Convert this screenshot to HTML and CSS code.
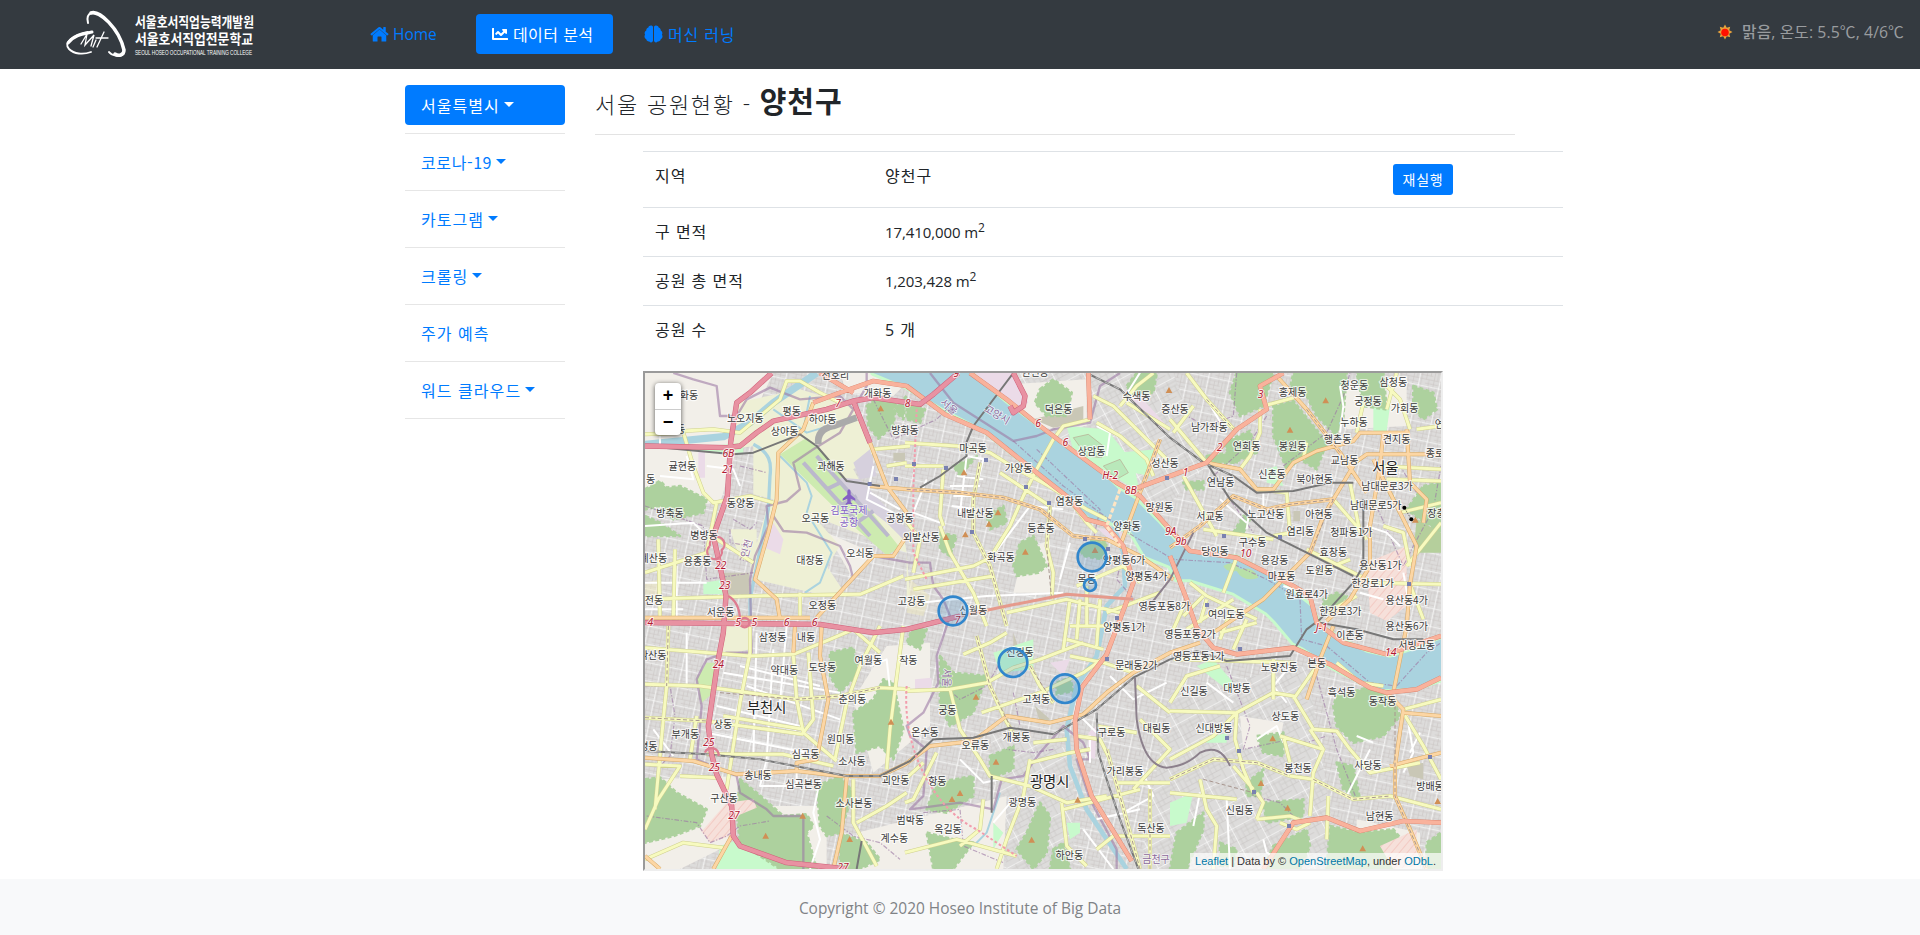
FILE: index.html
```html
<!DOCTYPE html>
<html lang="ko">
<head>
<meta charset="utf-8">
<title>서울 공원현황</title>
<link rel="stylesheet" href="styles.css">
</head>
<body>
<nav class="navbar">
  <svg class="logo" viewBox="0 0 190 48" width="190" height="48">
    <g fill="none" stroke="#fff" stroke-linecap="round">
      <path d="M22 13C19 2 28-1 39 9C53 21 60 39 57 44C54 48 45 45 43 42" stroke-width="2"/>
      <path d="M25 3C33 0 53 18 58 40C58 46 52 46 49 44" stroke-width="3.5"/>
      <path d="M22 22C6 25-3 33 3 39C8 44 17 45 25 42" stroke-width="1.8"/>
      <path d="M2 33C8 25 17 24 26 22" stroke-width="3"/>
      <path d="M15 34L21 24L19 35L28 25L25 36M30 30L27 37M38 22L31 37M30 28H42" stroke-width="1.3"/>
    </g>
    <text class="logo-name" x="69" y="17" textLength="119" lengthAdjust="spacingAndGlyphs">서울호서직업능력개발원</text>
    <text class="logo-name" x="69" y="34" textLength="118" lengthAdjust="spacingAndGlyphs">서울호서직업전문학교</text>
    <text class="logo-sub" x="69" y="45" textLength="117" lengthAdjust="spacingAndGlyphs">SEOUL HOSEO OCCUPATIONAL TRAINING COLLEGE</text>
  </svg>
  <div class="nav-links">
    <a class="nav-link home"><svg width="19" height="16" viewBox="0 0 576 512"><path fill="currentColor" d="M288 115L72 293v187q0 16 16 16h136V352q0-16 16-16h96q16 0 16 16v144h136q16 0 16-16V293zM572 251L488 182V44q0-12-12-12h-56q-12 0-12 12v72L318 43q-30-22-60 0L4 251q-8 8-2 17l26 31q8 8 17 2L280 107q8-6 16 0l235 194q9 6 17-2l26-31q6-9-2-17z"/></svg><span>Home</span></a>
    <a class="nav-link active"><svg width="16" height="16" viewBox="0 0 512 512"><path fill="currentColor" d="M64 64H16Q0 64 0 80v336q0 32 32 32h464q16 0 16-16v-32q0-16-16-16H64zM464 96H346c-22 0-32 26-17 41l32 32-73 73-73-73q-23-20-45 0L103 236q-12 12 0 23l22 22q12 12 23 0l44-44 73 73q23 20 46 0l96-96 32 32c15 15 41 5 41-17V112q0-16-16-16z"/></svg><span>데이터 분석</span></a>
    <a class="nav-link brain"><svg width="19" height="18" viewBox="0 0 19 18"><path fill="currentColor" d="M9 1.8C8-.3 4.800.2 4.400 2.400C2.400 3 2.200 4.700 2.300 5.500C.4 6.700.3 8.600 1.100 9.700C-.1 11.300.6 13.400 2.200 14C2.200 16 4.300 16.700 5.300 16.400C6.500 18.200 9 17.300 9 15.600zM10 1.800C11-.3 14.200.2 14.600 2.400C16.600 3 16.800 4.700 16.700 5.500C18.600 6.700 18.700 8.600 17.900 9.700C19.100 11.300 18.400 13.400 16.800 14C16.800 16 14.700 16.700 13.700 16.400C12.500 18.200 10 17.300 10 15.600z"/></svg><span>머신 러닝</span></a>
  </div>
  <div class="weather"><svg width="16" height="16" viewBox="-8 -8 16 16"><path fill="#e9a23b" d="M0-7.500L1.800-4.300L5.200-5.200L4.300-1.800L7.500 0L4.300 1.800L5.200 5.200L1.800 4.300L0 7.500L-1.800 4.300L-5.200 5.200L-4.300 1.800L-7.500 0L-4.300-1.800L-5.200-5.200L-1.800-4.300z"/><circle cy=".5" r="3.800" fill="#f10"/></svg><span><b>맑음</b>, 온도: 5.5℃, 4/6℃</span></div>
</nav>

<main class="page">
  <aside class="sidebar">
    <div class="side-item"><a class="side-link selected caret">서울특별시</a></div>
    <div class="side-item"><a class="side-link caret corona">코로나-19</a></div>
    <div class="side-item"><a class="side-link caret">카토그램</a></div>
    <div class="side-item"><a class="side-link caret">크롤링</a></div>
    <div class="side-item"><a class="side-link">주가 예측</a></div>
    <div class="side-item"><a class="side-link caret">워드 클라우드</a></div>
  </aside>
  <section class="content">
    <h3 class="title"><span>서울 공원현황 -</span> <strong>양천구</strong></h3>
    <div class="detail">
      <table class="info">
        <tr><td class="key">지역</td><td class="value">양천구</td><td class="action"><button class="rerun">재실행</button></td></tr>
        <tr><td>구 면적</td><td class="num">17,410,000 m<sup>2</sup></td><td></td></tr>
        <tr><td>공원 총 면적</td><td class="num">1,203,428 m<sup>2</sup></td><td></td></tr>
        <tr><td>공원 수</td><td>5 개</td><td></td></tr>
      </table>
      <div class="map">
<svg class="tiles" viewBox="15 21 2388 1488" preserveAspectRatio="none">
<defs>
  <pattern id="streets" width="62" height="54" patternUnits="userSpaceOnUse" patternTransform="rotate(12)">
    <path class="lane" d="M0 9H62M0 22H40M0 34H62M20 46H62M8 0V54M22 9V34M34 0V22M46 9V54M56 0V34M30 34V54"/>
    <path class="street" d="M0 0H62M0 0V54"/>
  </pattern>
  <pattern id="streets-b" width="83" height="71" patternUnits="userSpaceOnUse" patternTransform="rotate(-28)">
    <path class="lane" d="M0 12H83M30 24H83M0 40H83M0 55H50M12 0V71M27 12V55M44 0V40M60 24V71M72 0V40"/>
    <path class="street" d="M0 0H83M0 0V71"/>
  </pattern>
  <pattern id="hatch" width="18" height="18" patternUnits="userSpaceOnUse" patternTransform="rotate(40)">
    <path d="M0 0V18" stroke="#efb5ad" stroke-width="3"/>
  </pattern>
</defs>
<rect x="15" y="21" width="2388" height="1488" fill="#dddcdb"/>
<rect x="15" y="21" width="2388" height="1488" fill="url(#streets)"/>
<path fill="#dddcdb" d="M1040 21H1600L1700 300L1500 500L1300 400zM1590 980L2000 900L2100 1509H1500zM1050 1100L1300 1150V1509H1100z"/>
<path fill="url(#streets-b)" d="M1040 21H1600L1700 300L1500 500L1300 400zM1590 980L2000 900L2100 1509H1500zM1050 1100L1300 1150V1509H1100z"/>
<g class="open">
  <path d="M15 21H400L290 250L240 410L15 430zM600 21H830L760 90L620 80zM60 1240L300 1230L260 1440L120 1509H15V1240zM400 1320H560V1509H340zM560 500L700 560L640 640zM640 1000L740 840L870 830V1080L700 1220zM650 1400L1100 1290L1090 1509H640zM1040 60L1340 40V180L1180 190zM1800 1050L1930 1070L1920 1130L1810 1150zM1150 560L1230 520V680H1120zM2100 50L2300 30V180L2120 190zM2150 1360L2340 1400V1509H2150z"/>
</g>
<path class="farm" d="M290 110L480 70L640 120L700 260L640 310L700 420L790 500L800 560L810 690L560 690L345 640L330 600L380 430L400 400L340 385L340 240L280 250zM250 780H330V850L240 870zM520 450L600 540L560 600L620 690H800V560zM270 490H350V590L300 580z"/>
<path fill="#efeabf" opacity=".5" d="M810 640L870 690L850 750L800 740zM15 650L60 640V700H15z"/>
<path class="grass" d="M420 265L500 215L560 270L780 545L740 568L640 480zM170 940L200 890H230L220 980L185 1010z"/>
<path class="terminal" d="M600 335L660 340L800 490L800 530L740 470L610 370zM640 290L690 250L710 330L660 340z"/>
<path class="runway" d="M490 290L690 510M530 270L745 510M560 370L600 350M600 420L650 390M650 470L700 435"/>
<path class="industrial" d="M1000 21H1120L1165 110L1110 140L1030 80zM400 470L430 520L420 565L375 545zM175 255H195V335H175zM825 940L875 935V970H825zM1370 485L1450 500L1440 550zM1230 890L1290 880L1270 930zM1345 1100L1370 1080L1365 1180L1345 1170zM1450 75L1500 90L1590 190L1560 190z"/>
<path class="school" d="M250 620H328V685H250zM1180 160L1330 120V170L1240 185zM1185 1020L1230 1060L1200 1070zM2300 1200L2350 1190V1240L2310 1230zM1960 435H1980V465H1960zM1120 800L1145 870H1120zM760 260H795V285H760z"/>
<path class="park" d="M1280 180L1400 190L1480 290L1500 380L1300 255zM1430 260L1550 250L1530 330L1480 320zM190 650L255 640V685H190zM160 245L310 230V260L160 255zM240 1440L300 1420L440 1490V1509H230zM1060 860L1180 820L1180 910L1080 920zM1670 900L1720 880L1780 950L1760 970zM1590 1310L1660 1280L1640 1370L1590 1380zM2200 120H2250L2240 195H2200zM1060 1370L1090 1400L1060 1450zM1280 1370H1320V1400L1290 1420zM1880 310L1910 300L1930 360L1880 350zM1690 1120L1760 1100V1130H1700z"/>
<path class="stadium" d="M1300 215L1345 205L1390 240L1385 275L1340 270zM1390 300L1440 280L1465 320L1430 340z"/>
<g class="forest">
  <path d="M15 370L60 345L80 365L120 360L200 400L190 440L100 460L60 420L15 430zM15 450L60 470L120 510H15zM680 120L720 90L770 105L760 180L715 218L685 180zM800 100L855 130L840 170L800 160zM800 90L760 130L790 160z"/>
  <path d="M1200 70L1240 40L1295 80L1280 150L1220 150L1185 110zM1120 600L1140 530L1180 510L1220 600L1195 620L1130 630zM1320 550L1360 520L1400 530L1390 580L1330 570zM1460 60L1490 21H1550L1540 80L1480 85zM1040 450L1090 420L1100 470L1050 490zM900 500L950 510L930 570L900 550zM940 300L1010 270L960 330z"/>
  <path d="M1790 21H1900L1870 120L1800 150L1770 80zM1900 120L1960 105L2060 230L2030 310L1980 280L1940 310L1900 210zM1960 21H2120L2110 150L2090 210L2030 150L2000 90L1950 70zM2150 21H2230L2240 130L2170 120zM2320 60L2380 80L2390 130L2350 160L2320 130zM2350 360L2403 350V500L2340 460L2300 430zM1750 230L1830 195L1850 260L1780 290zM1700 270L1770 260L1790 290H1700zM1630 350L1690 345L1690 370L1640 370zM1780 500L1810 450L1830 460L1810 500zM2050 700L2090 680L2120 690L2100 720L2050 730z"/>
  <path d="M570 860L640 845L655 920L600 980L570 930zM640 1040L700 1000L730 940L760 950L790 1090L760 1180L720 1140L650 1160zM15 1240L60 1235L110 1280L200 1330L180 1380L100 1410L15 1430zM300 1240L350 1280L430 1350L500 1345L520 1380L500 1400L530 1509H420L300 1430L290 1340zM530 1260L600 1230L640 1280L600 1400L560 1410L540 1380zM600 1400L680 1430L720 1480L660 1509H600z"/>
  <path d="M900 870L940 920L1040 930L1000 1040L930 1080L900 1020zM1050 1170L1120 1140L1120 1210L1050 1240zM890 1250L1000 1230L1000 1290L920 1340L860 1330zM1160 1400L1200 1310L1230 1350L1220 1460L1180 1509L1130 1450zM860 1400L940 1420L1000 1430L940 1509H880zM820 780L860 790L840 850L800 830zM1240 1450L1270 1430L1290 1509H1230zM1250 950L1290 935L1300 975L1250 985z"/>
  <path d="M2090 990L2200 960L2260 1000L2280 1050L2230 1110L2140 1130L2090 1080L2080 1020zM1850 1110L1930 1100L1930 1170L1870 1160zM1870 1310L1990 1300L1990 1350L1880 1370zM1610 1400L1690 1340L1690 1390L1640 1509H1590zM2070 1380L2160 1400L2260 1390L2300 1440L2260 1509H2060zM1900 1440L2000 1390L2010 1440L1980 1509H1870zM2090 1190L2140 1200L2160 1300L2110 1270zM2360 1430L2403 1400V1509H2360zM1820 1250L1870 1210L1860 1290H1820zM1740 1430L1790 1450L1780 1500H1740z"/>
</g>
<path class="military" d="M190 1390L260 1310L340 1300L350 1325L290 1350L270 1410L210 1430L180 1390zM2180 590L2300 540V720L2240 765L2190 740zM2220 1440L2330 1390L2330 1500L2260 1509z"/>
<path fill="url(#hatch)" d="M190 1390L260 1310L340 1300L350 1325L290 1350L270 1410L210 1430L180 1390zM2180 590L2300 540V720L2240 765L2190 740zM2220 1440L2330 1390L2330 1500L2260 1509z"/>
<path fill="#b5cf9c" d="M2330 460L2403 500L2403 560L2320 560z"/>
<g class="stream">
  <path stroke-width="22" d="M15 235L250 212L330 170L400 110L530 21"/>
  <path stroke-width="10" d="M340 235C390 260 395 290 390 330L385 430L350 600L330 700V780"/>
  <path stroke-width="6" d="M420 270L500 350L515 390L500 440L575 560L540 650L495 680M490 190L510 90M400 130L500 200L600 170"/>
  <path stroke-width="14" d="M1420 480L1450 560L1455 660L1400 720L1370 870L1310 960L1280 1090L1290 1200L1340 1330L1460 1509"/>
  <path stroke-width="6" d="M1080 1280L1040 1400L1000 1440"/>
</g>
<path class="river" d="M800 21H990L1095 110L1235 215L1395 330L1435 370L1485 400L1555 470L1600 520L1650 560L1790 575L1910 640L2010 720L2040 780L2100 820L2180 860L2250 875L2330 850L2403 820V940L2330 965L2230 970L2190 960L2080 905L1990 845L1960 830L1905 765L1880 740L1780 680L1650 640L1610 640L1590 600L1515 570L1475 500L1405 465L1355 460L1275 390L1190 320L1030 190L915 130L795 60L700 21z"/>
<path fill="#b8e0a8" d="M1750 600Q1780 580 1800 610Q1840 600 1855 635Q1810 650 1790 615Q1760 620 1750 600z"/>
<path class="boundary" d="M100 21L160 40L230 60L240 150L290 150L320 100L390 65L480 100L600 90L640 130M640 130L600 200L520 250L460 290L480 370L440 405L380 420L385 480L345 570L330 640L335 860L260 860L200 880L170 940L185 1020L170 1180L290 1230L300 1280L380 1330L400 1350L490 1350L490 1509M400 450L430 495L500 500L600 540L630 600L640 640L700 570L810 590L870 590L880 660L910 700L930 750L890 870L895 950L850 1040L800 1080L810 1110L860 1150L850 1290L810 1330L960 1310L1060 1330L1085 1240L1150 1230L1200 1160L1270 1080L1330 1130L1350 1180L1310 1180L1350 1300L1430 1450V1509M640 130L680 60V21M870 21L940 110L1120 225L1190 210L1240 190L1350 170L1380 60L1440 21"/>
<path class="ward" d="M1120 225L1270 360L1380 440L1480 510L1600 580L1770 590L1880 640L1980 700L1985 820L2060 840L2190 950L2270 960L2360 860L2403 830M1190 250L1380 430L1360 520M1450 560L1430 640L1500 720M15 420L190 480L200 640L340 620M20 1350L170 1370L210 1430L260 1410L300 1380L390 1365M560 1350L640 1410L720 1430L780 1480M900 950L960 1000L1040 960L1080 890M1790 21L1780 150L1700 180L1600 130M1880 150L1830 230L1720 330L1840 500M1930 300L2060 200L2110 90L2130 21M2030 930L2060 1040L2090 1150L2150 1300M1760 900L1830 1080L1810 1150L1950 1120L2000 1130L2060 1110M1800 1200L1840 1290L1920 1310L1970 1360M2200 400L2290 600L2320 540L2380 430L2403 300M2330 380L2280 300M1240 1150L1180 1160L1100 1150M1120 980L1140 1080M850 1340L960 1330L970 1440L1090 1490M700 100L760 220L890 160L930 120M15 960L90 960L105 1050L90 1170L60 1200M270 490V530L330 540L300 580L340 590M280 460L330 490L350 470M300 300L380 320"/>
<path class="white" d="M140 270L160 340L60 330M200 300L280 310L300 360M15 480L160 470L190 500M60 150L60 240M110 600V760M15 650H200M15 730H130M140 800V960M40 1090L100 1170M350 800L340 1170M400 850L380 1180M440 780L420 1010M300 900L540 960M320 960L600 1060M200 1100L500 1160M230 1020L480 1080M250 920L600 980M380 1180L360 1260H470V1220M540 1240L520 1340L540 1420L510 1509M690 900L740 880L750 970M700 300L680 400L760 440M690 380L780 430M960 440L980 270L1030 280L1000 400M930 360H1020M940 390H1010M950 330L1030 340M935 420L1010 430M860 340L820 440L900 470M1050 580L1170 420L1270 430M1290 530L1260 640M840 710L1040 690L1270 680M1370 180L1410 200L1400 270M2100 60L2110 120L2100 200M1700 100L1760 200M1740 400L1820 470M1870 380V430M1830 420L1820 490M1930 660L1990 680M2160 680L2230 700M2310 730L2290 620M2180 480L2240 500L2280 540M1500 20L1450 100M1700 950L1780 1010M1950 900L1900 960L1940 1010M1850 1120L1910 1080L1930 1130M2120 1290L2190 1150M2200 1130L2150 1110M2300 1040L2320 1160L2290 1220M1760 1300L1770 1509M1680 1280L1660 1380M2310 1160L2340 1100M1330 1110H1350V1190M1320 1050L1370 1100M1120 1300L1060 1370M1500 1200L1540 1290L1450 1340M1330 1390L1420 1509M1370 1360L1500 1330M960 1180L1030 1250L1080 1240M1870 1420L1880 1460L1900 1470M1410 930L1480 1000L1580 950"/>
<g id="yellow-roads">
<path class="y" d="M15 205L130 200L160 300L190 380L220 410L330 390L400 410M130 195L220 190L300 200L420 100L440 45L480 45L540 80L600 110M15 700L340 690L660 685L790 630M230 410L200 560L15 620M55 520L60 760M105 550L100 760M480 680V760M200 500L340 590M700 250L810 240M740 300L800 290M15 845L330 870L460 865L570 820L640 790L720 860M15 955L180 960L360 985L470 1000L600 990L720 965L810 970M15 1055L200 1065L490 1105M15 1195L120 1200L55 1300L15 1390M330 780V860L300 1010L260 1270M85 780L80 960L70 1060L45 1330M460 870L470 1000L490 1100L590 1185M505 860L520 1060L490 1100M720 780L660 900L620 1010L585 1180M790 780L750 1090L740 1210M640 1240V1370L710 1500M650 1370L740 1320L800 1280M200 1165L430 1165L580 1200M250 1050L490 1090M170 1050L150 1180M230 1235L120 1230M15 1480L130 1430L250 1445"/>
<path class="y" d="M795 230L950 240L1050 260L1130 310L1190 340L1280 390L1340 470L1370 500M1350 160L1270 180L1240 220L1190 310L1150 390L1110 480L1060 560M910 310L900 450L910 480M795 300H910M1020 290L1000 400V500L1050 600L1100 780M900 480L930 560L1000 680L1040 780M795 640L1000 600L1060 570M820 670L1060 630M1230 420L1220 540L1240 620L1235 700M1100 740L1280 700L1440 740M1340 660V780M1360 90L1420 120L1500 200L1590 290M1370 170L1440 210L1520 280L1540 330M1440 120L1490 60L1540 21M1460 110L1590 190M1290 700L1270 850M1380 700L1370 840M1320 700L1310 820M1290 780H1420M1280 820L1390 850M1310 660L1450 600L1500 650M1400 740L1560 680M795 460L840 520L820 620M1160 320L1340 430L1400 460M1080 320L1230 420"/>
<path class="y" d="M795 975L930 970L1040 950L1120 905L1200 880M970 865L1050 830L1100 800M1010 810L1050 960L1095 1060L1125 1110M930 970L960 1090L1020 1180L1050 1230L1170 1260L1280 1310L1400 1290M1170 900L1200 960L1240 1010M1025 1040L1200 980L1330 920M795 1240L850 1190M890 1160L820 1300L795 1310M1170 1180L1150 1290L1100 1420L1070 1509M1170 1190L1290 1160L1350 1150M1265 1310L1280 1440L1340 1500M1270 1330L1350 1310L1500 1270M1290 870L1390 890L1480 920M1400 1150L1440 1290L1500 1509M1370 1450L1420 1410H1590M1530 1270V1509M795 1460L950 1420L1130 1470M1030 1300L1020 1390L960 1440M1430 1250H1590M1200 880L1330 830M1330 920L1400 870M1310 1110L1380 1120L1410 1180M1180 1130L1280 1120M1490 960L1590 1040M1500 1060L1590 1150L1480 1270M1370 1080L1490 1100"/>
<path class="y" d="M1590 1035L1790 1040L1900 980L1960 990L2020 1090L2090 1095L2130 1150L2190 1220L2340 1190M1790 1040L1785 1120L1810 1210L1840 1280M1590 1280L1790 1300M1590 1240L1720 1180L1850 1190L1950 1230L2020 1240L2140 1300L2250 1290L2403 1330M1680 1240L1700 1330L1730 1380L1720 1509M1850 1360L1950 1350L2000 1370M2010 1090L2050 1150L2020 1220L2010 1350M2065 1290L2060 1420M1900 1000V880M1960 1000L2030 900M1930 1110L1950 1190M2290 1040L2350 1140L2403 1240M1920 1110L2050 1150M1600 880L1960 890M1590 1010L1640 930L1740 900M1590 1180L1720 1110L1790 1040M1780 1200L1840 1270M2090 890L2160 950L2230 960M2290 1030L2403 1000M1850 1280L1870 1310L1850 1360M2010 1370L1970 1390L1920 1370"/>
<path class="y" d="M1640 21L1700 100L1790 200M1660 120L1600 200M1590 160L1700 290M1860 130V200L1830 270L1800 310M1690 490L1830 510L1900 520M1630 330L1680 420L1730 510M1850 370L1940 380L1950 500L1900 510M2080 400L2150 480L2180 520M2000 550L2100 600L2200 650L2403 655M2220 300L2403 310M2330 190L2403 180M2240 340L2403 345M2240 60L2280 100L2310 190M2170 110L2150 200M2230 480L2290 500L2310 600M2300 600L2403 470M1790 575L1750 680M1650 650L1700 690L1850 760M1630 750L1690 690M1740 800L1850 770M2310 655L2350 760M2060 740L2150 690M1870 120L1980 90M1990 280L2000 230M2130 350L2160 500M2270 21L2240 130M2250 380L2280 440L2403 410M2030 620L2130 580M1640 700L1600 790M1700 700L1680 770M1770 740L1740 820M1820 760L1780 850M1640 790L1780 700"/>
</g>
<use href="#yellow-roads" class="fill-pass"/>
<path class="casing o" d="M520 110L490 190L415 260L410 400L385 500L345 640L410 700L420 760M530 755L640 635L700 570L760 570L800 510M690 230L740 360L800 440M690 360L800 370L960 380L1090 395L1200 430L1300 510L1400 520L1500 570L1600 640M1560 220L1500 380L1440 540M15 755H510M15 1175L160 1185L290 1225L470 1215L600 1230H720L795 1195L870 1140L1000 1125L1100 1050L1230 1070L1330 1045L1400 980L1480 920L1590 860L1680 830M460 860L465 780M545 780L540 870L565 1000L530 1180L470 1190V1220M620 1235L605 1400L580 1509M15 1470L60 1509M275 1410L220 1509M1700 290L1800 310L1850 370H1900L1960 290L2030 255L2140 225L2160 200H2310M2130 300L2180 265H2403M1910 30L2000 130L2100 260L2180 380M2230 200L2220 300L2190 480V600L2130 700L2060 765M2300 190L2310 350L2360 400L2350 470M1590 545L1680 480L1780 390L1880 430L1950 415L2080 400L2140 300M2080 400L2050 450L2010 560L1870 700L1720 800M2200 280L2260 400L2330 540L2310 655L2300 780L2260 980M2240 980L2290 1030L2265 1200V1290L2310 1390L2360 1509M2250 1200L2403 1160M2290 1040L2403 1050M2000 1000L2040 880L2080 780"/>
<path class="orange" d="M520 110L490 190L415 260L410 400L385 500L345 640L410 700L420 760M530 755L640 635L700 570L760 570L800 510M690 230L740 360L800 440M690 360L800 370L960 380L1090 395L1200 430L1300 510L1400 520L1500 570L1600 640M1560 220L1500 380L1440 540M15 755H510M15 1175L160 1185L290 1225L470 1215L600 1230H720L795 1195L870 1140L1000 1125L1100 1050L1230 1070L1330 1045L1400 980L1480 920L1590 860L1680 830M460 860L465 780M545 780L540 870L565 1000L530 1180L470 1190V1220M620 1235L605 1400L580 1509M15 1470L60 1509M275 1410L220 1509M1700 290L1800 310L1850 370H1900L1960 290L2030 255L2140 225L2160 200H2310M2130 300L2180 265H2403M1910 30L2000 130L2100 260L2180 380M2230 200L2220 300L2190 480V600L2130 700L2060 765M2300 190L2310 350L2360 400L2350 470M1590 545L1680 480L1780 390L1880 430L1950 415L2080 400L2140 300M2080 400L2050 450L2010 560L1870 700L1720 800M2200 280L2260 400L2330 540L2310 655L2300 780L2260 980M2240 980L2290 1030L2265 1200V1290L2310 1390L2360 1509M2250 1200L2403 1160M2290 1040L2403 1050M2000 1000L2040 880L2080 780"/>
<path class="subway" d="M15 1055L200 1065M240 980L470 1000L600 990L720 965M800 370L960 380L1090 395L1200 430L1300 510L1400 520M1020 290L1000 400V500L1050 600L1100 780M1230 420L1220 540L1235 700M1560 220L1500 380M1590 545L1680 480L1780 390L1880 430L1950 415L2080 400M2000 130L2100 260M2080 400L2010 560M1590 1240L1720 1180L1850 1190L1950 1230M1690 1240L1840 1280M2265 1000V1290L2360 1509M2020 1240L2140 1300L2250 1290M1170 900L1240 1010M1010 810L1050 960L1125 1110M1700 100L1790 200M1400 1150L1440 1290L1500 1509M1530 1270V1509M85 780L80 960"/>
<path class="rail" d="M15 240L280 265L340 260L480 205L530 240L620 345L720 360M840 365L900 330L980 270L975 240L1000 180L1120 21M15 1155L200 1165L360 1180L620 1230H720L810 1185L880 1120L1000 1115L1110 1085L1240 1105L1370 1030L1480 935L1590 880L1670 855L1760 885L1950 870L2000 790L2040 760L2140 650L2170 600V400M1340 21L1440 70L1590 215L1690 290L1780 330L1850 380L1960 375L2070 350L2140 350M1700 290L1770 400L1880 500L2000 560L2140 630M1370 1040L1375 1160L1400 1240L1440 1360L1495 1509M665 1425L650 1509M2040 770L2150 790L2260 820L2350 820M1055 1230V1340"/>
<path class="rail-dash" d="M15 1155L200 1165L360 1180L620 1230H720M1370 1040L1375 1160L1400 1240L1440 1360L1495 1509M1340 21L1440 70L1590 215L1690 290L1780 330M1240 1105L1370 1030L1480 935"/>
<path class="rail-violet" d="M1485 935L1490 1060Q1510 1200 1580 1205Q1640 1200 1680 1160Q1740 1130 1770 1200M1590 640L1660 500M1590 640L1520 730"/>
<path class="apron" d="M535 235Q530 190 580 180L650 155"/>
<path class="casing t" d="M520 110L600 80L700 45L800 60L915 145L1040 200L1190 320L1280 390L1340 460L1395 475L1450 540L1480 650L1455 720L1400 865L1325 965L1305 1065L1310 1150L1355 1290L1475 1485M990 21L1100 100L1200 180L1300 255L1430 350L1500 390L1590 490L1650 555L1790 575L1900 630L1960 660L2010 690L2030 770L2110 830L2240 865L2403 810M1590 570L1640 700L1670 785L1720 845L1790 865L1960 845L2070 895L2190 965L2240 980L2330 970L2403 935M1930 21L1860 60L1880 130L1790 190L1700 290L1590 330L1480 370M1345 21L1350 160M1870 1509L1960 1370L2060 1355L2160 1395L2290 1365L2403 1370M540 21L640 80"/>
<path class="trunk" d="M520 110L600 80L700 45L800 60L915 145L1040 200L1190 320L1280 390L1340 460L1395 475L1450 540L1480 650L1455 720L1400 865L1325 965L1305 1065L1310 1150L1355 1290L1475 1485M990 21L1100 100L1200 180L1300 255L1430 350L1500 390L1590 490L1650 555L1790 575L1900 630L1960 660L2010 690L2030 770L2110 830L2240 865L2403 810M1590 570L1640 700L1670 785L1720 845L1790 865L1960 845L2070 895L2190 965L2240 980L2330 970L2403 935M1930 21L1860 60L1880 130L1790 190L1700 290L1590 330L1480 370M1345 21L1350 160M1870 1509L1960 1370L2060 1355L2160 1395L2290 1365L2403 1370M540 21L640 80"/>
<path class="casing m" d="M395 21L330 80L290 110L272 230L262 390L220 510L240 600L258 690L250 800L232 895L205 1080L215 1165L230 1225L275 1320L280 1410L300 1440L440 1490L620 1509M15 240L260 245L300 240L350 200L400 165L560 130L640 105L700 95L840 115L880 85L955 21M640 105L690 230M15 770L540 775L700 800L800 790L960 750M1120 21L1155 90L1150 120L1120 140L1110 120"/>
<path class="motorway" d="M395 21L330 80L290 110L272 230L262 390L220 510L240 600L258 690L250 800L232 895L205 1080L215 1165L230 1225L275 1320L280 1410L300 1440L440 1490L620 1509M15 240L260 245L300 240L350 200L400 165L560 130L640 105L700 95L840 115L880 85L955 21M640 105L690 230M15 770L540 775L700 800L800 790L960 750M1120 21L1155 90L1150 120L1120 140L1110 120"/>
<path class="ramp" d="M960 750L1100 720L1280 685L1480 700"/>
<path class="interchange" d="M210 540a22 22 0 1 1 35 12a22 22 0 1 1-35-12M195 1160a20 18 0 1 1 40 10M300 770a14 14 0 1 0 28 0a14 14 0 1 0-28 0M265 690Q300 710 300 765"/>
<path class="tunnel" d="M830 130L820 370L820 560L860 640M800 960Q790 1100 850 1220T1010 1390L1130 1470"/>
<path class="bridge" d="M1440 370L1400 480L1440 540"/>
<g class="peak">
  <path d="M722 118l10 18h-20zM972 310l10 18h-20zM1074 430l10 18h-20zM1047 464l10 18h-20zM976 496l10 18h-20zM918 504l10 18h-20zM1156 548l10 18h-20zM1365 543l10 18h-20zM1587 63l10 18h-20zM2057 94l10 18h-20zM1950 182l10 18h-20zM2326 452l10 18h-20z"/>
  <path d="M753 1058l10 18h-20zM488 1340l10 18h-20zM377 1400l10 18h-20zM629 1410l10 18h-20zM1008 983l10 18h-20zM1068 1178l10 18h-20zM960 1272l10 18h-20zM936 1290l10 18h-20zM1313 1292l10 18h-20zM1175 1412l10 18h-20zM1898 1108l10 18h-20zM1863 1242l10 18h-20zM1943 1316l10 18h-20zM2168 1438l10 18h-20zM2393 1296l10 18h-20z"/>
</g>
<path class="station" d="M683 348h12v12h-12zM762 333h12v12h-12zM816 288h12v12h-12zM912 300h12v12h-12zM1032 276h12v12h-12zM1152 357h12v12h-12zM1221 405h12v12h-12zM990 492h12v12h-12zM1329 513h12v12h-12zM1398 543h12v12h-12zM1575 330h12v12h-12zM1746 504h12v12h-12zM1914 507h12v12h-12zM2301 648h12v12h-12zM1695 711h12v12h-12zM1425 750h12v12h-12zM1395 873h12v12h-12zM1794 843h12v12h-12zM1755 1110h12v12h-12zM1791 1149h12v12h-12zM1836 1272h12v12h-12zM1941 1374h12v12h-12zM2364 1167h12v12h-12z"/>
<path fill="#8461c4" d="M627 370q5 0 5 8v8l14 12v6l-14-6v10l5 5v4l-10-3-10 3v-4l5-5V398l-14 6v-6l14-12v-8q0-8 5-8z"/>
<path d="M2294 427L2314 460" stroke="#222" stroke-width="2" stroke-dasharray="4 4"/><circle cx="2293" cy="425" r="6"/><circle cx="2314" cy="460" r="6"/>
<g class="shield">
  <text x="265" y="273">6B</text><text x="263" y="321">21</text><text x="242" y="608">22</text><text x="254" y="670">23</text><text x="594" y="124">7</text><text x="803" y="123">8</text><text x="949" y="34">9</text><text x="31" y="781">4</text><text x="294" y="781">5</text><text x="343" y="781">5</text><text x="440" y="781">6</text><text x="524" y="781">6</text>
  <text x="235" y="905">24</text><text x="206" y="1139">25</text><text x="223" y="1215">25</text><text x="282" y="1360">27</text><text x="609" y="1515">27</text><text x="1194" y="183">6</text><text x="1276" y="239">6</text><text x="1411" y="339">H-2</text><text x="1472" y="384">8B</text><text x="1592" y="507">9A</text><text x="1623" y="537">9b</text><text x="1862" y="96">3</text><text x="1739" y="255">2</text><text x="1637" y="330">1</text><text x="1817" y="573">10</text><text x="953" y="775">7</text><text x="2045" y="796">J-1</text><text x="2252" y="871">14</text>
</g>
<g class="place">
  <text x="147" y="98">화동</text><text x="586" y="40">전호리</text><text x="713" y="92">개화동</text><text x="455" y="147">평동</text><text x="316" y="168">노오지동</text><text x="548" y="170">하야동</text><text x="434" y="207">상야동</text><text x="795" y="203">방화동</text><text x="127" y="313">귤현동</text><text x="573" y="313">과해동</text><text x="32" y="350">동</text><text x="302" y="422">동양동</text><text x="90" y="452">방축동</text><text x="526" y="468">오곡동</text><text x="780" y="468">공항동</text><text x="192" y="520">병방동</text><text x="40" y="589">계산동</text><text x="173" y="598">용종동</text><text x="510" y="593">대장동</text><text x="660" y="572">오쇠동</text><text x="844" y="525">외발산동</text><text x="42" y="713">전동</text><text x="242" y="750">서운동</text><text x="547" y="729">오정동</text><text x="815" y="716">고강동</text><text x="122" y="200">동</text>
  <text x="398" y="824">삼정동</text><text x="498" y="824">내동</text><text x="38" y="879">작산동</text><text x="685" y="893">여월동</text><text x="805" y="893">작동</text><text x="433" y="924">약대동</text><text x="547" y="915">도당동</text><text x="637" y="1010">춘의동</text><text x="249" y="1087">상동</text><text x="136" y="1117">부개동</text><text x="25" y="1152">평동</text><text x="602" y="1130">원미동</text><text x="497" y="1177">심곡동</text><text x="636" y="1197">소사동</text><text x="354" y="1238">송내동</text><text x="491" y="1265">심곡본동</text><text x="767" y="1255">괴안동</text><text x="252" y="1308">구산동</text><text x="642" y="1324">소사본동</text><text x="811" y="1374">범박동</text><text x="763" y="1428">계수동</text>
  <text x="1185" y="31">현천동</text><text x="1256" y="142">덕은동</text><text x="1490" y="101">수색동</text><text x="1605" y="142">증산동</text><text x="999" y="258">마곡동</text><text x="1136" y="317">가양동</text><text x="1355" y="267">상암동</text><text x="1575" y="304">성산동</text><text x="1288" y="417">염창동</text><text x="1006" y="454">내발산동</text><text x="1203" y="499">등촌동</text><text x="1558" y="434">망원동</text><text x="1461" y="493">양화동</text><text x="1083" y="585">화곡동</text><text x="1452" y="595">양평동6가</text><text x="1519" y="643">양평동4가</text><text x="1340" y="652">목동</text><text x="1000" y="743">신월동</text><text x="1573" y="733">영등포동8가</text><text x="1453" y="794">양평동1가</text>
  <text x="1140" y="870">신정동</text><text x="1189" y="1012">고척동</text><text x="1489" y="909">문래동2가</text><text x="922" y="1043">궁동</text><text x="855" y="1109">온수동</text><text x="1006" y="1149">오류동</text><text x="1129" y="1126">개봉동</text><text x="1415" y="1109">구로동</text><text x="1550" y="1097">대림동</text><text x="892" y="1257">항동</text><text x="1455" y="1227">가리봉동</text><text x="1147" y="1319">광명동</text><text x="924" y="1402">옥길동</text><text x="1533" y="1398">독산동</text><text x="1288" y="1478">하안동</text>
  <text x="1958" y="91">홍제동</text><text x="2143" y="68">청운동</text><text x="2260" y="60">삼청동</text><text x="2184" y="118">궁정동</text><text x="2294" y="138">가회동</text><text x="1708" y="195">남가좌동</text><text x="2142" y="179">누하동</text><text x="1820" y="251">연희동</text><text x="1958" y="253">봉원동</text><text x="2093" y="230">행촌동</text><text x="2270" y="230">견지동</text><text x="2114" y="293">교남동</text><text x="2385" y="274">종로</text><text x="1896" y="335">신촌동</text><text x="2024" y="350">북아현동</text><text x="1742" y="359">연남동</text><text x="2241" y="373">남대문로3가</text><text x="2207" y="429">남대문로5가</text><text x="1710" y="463">서교동</text><text x="1878" y="457">노고산동</text><text x="2037" y="455">아현동</text><text x="2403" y="452">장충동</text><text x="1981" y="508">염리동</text><text x="2134" y="511">청파동1가</text><text x="1838" y="541">구수동</text><text x="1725" y="568">당인동</text><text x="1904" y="595">용강동</text><text x="2080" y="571">효창동</text><text x="2221" y="608">용산동1가</text><text x="1925" y="643">마포동</text><text x="2038" y="624">도원동</text><text x="2198" y="662">한강로1가</text><text x="2000" y="696">원효로4가</text><text x="2300" y="713">용산동4가</text><text x="1759" y="755">여의도동</text><text x="2101" y="747">한강로3가</text><text x="2300" y="791">용산동6가</text><text x="2398" y="185">연</text>
  <text x="1650" y="815">영등포동2가</text><text x="1676" y="883">영등포동1가</text><text x="1918" y="914">노량진동</text><text x="2030" y="902">본동</text><text x="2130" y="819">이촌동</text><text x="2330" y="850">서빙고동</text><text x="1662" y="987">신길동</text><text x="1791" y="977">대방동</text><text x="2105" y="990">흑석동</text><text x="2228" y="1016">동작동</text><text x="1936" y="1062">상도동</text><text x="1722" y="1098">신대방동</text><text x="1974" y="1217">봉천동</text><text x="2184" y="1208">사당동</text><text x="2370" y="1271">방배동</text><text x="1799" y="1345">신림동</text><text x="2219" y="1362">남현동</text>
</g>
<g class="city"><text x="380" y="1040">부천시</text><text x="1229" y="1263">광명시</text><text x="2236" y="321">서울</text></g>
<g class="airport-name"><text x="627" y="443">김포국제</text><text x="627" y="481">공항</text></g>
<g class="region"><text x="1548" y="1490">금천구</text><text transform="translate(330 550) rotate(-75)">인천</text><text transform="translate(920 130) rotate(42)">서울</text><text transform="translate(1066 155) rotate(30)">고양시</text><text transform="translate(908 935) rotate(90)">서울</text></g>
<g class="marker"><circle cx="1356" cy="573" r="43"/><circle cx="1350" cy="657" r="18"/><circle cx="939" cy="735" r="43"/><circle cx="1119" cy="890" r="43"/><circle cx="1275" cy="968" r="43"/></g>
</svg>
        <div class="zoom"><a>+</a><a>−</a></div>
        <div class="credit"><a>Leaflet</a> | Data by © <a>OpenStreetMap</a>, under <a>ODbL</a>.</div>
      </div>
    </div>
  </section>
</main>
<footer class="footer"><span>Copyright © 2020 Hoseo Institute of Big Data</span></footer>
</body>
</html>
```
FILE: styles.css
```css
* { box-sizing: border-box; }
body { margin: 0; height: 935px; display: flex; flex-direction: column; overflow: hidden; background: #fff; color: #212529; font: 16px/24px "Open Sans", "Noto Sans CJK KR", sans-serif; }
.navbar { height: 69px; flex: none; display: flex; align-items: center; padding: 0 16px 2px 66px; background: #343a40; }
.logo { display: block; overflow: visible; }
.logo-name { fill: #fff; font: 700 14px "Noto Sans CJK KR", sans-serif; }
.logo-sub { fill: #fff; font: 8px "Liberation Sans", sans-serif; }
.nav-links { display: flex; margin-left: 98px; flex: 1; font-family: "Noto Sans CJK KR", sans-serif; }
.nav-link { display: flex; align-items: center; height: 40px; padding: 0 16px; color: #007bff; white-space: nowrap; border-radius: 4px; }
.nav-link svg { margin-right: 5px; flex: none; }
.nav-link.home { width: 106px; margin-right: 16px; font-family: "Open Sans", sans-serif; font-size: 15.500px; }
.nav-link.home svg { margin-right: 4px; }
.nav-link.active { width: 137px; color: #fff; background: #007bff; margin-right: 15px; letter-spacing: .4px; }
.nav-link.brain { letter-spacing: .8px; }
.weather { display: flex; align-items: center; gap: 9px; margin-top: -3px; color: #999c9f; font-size: 15.800px; letter-spacing: .08px; white-space: nowrap; }
.weather b { font-weight: 500; }
.page { display: flex; width: 1168px; margin-left: 405px; padding-top: 16px; flex: 1; }
.sidebar { width: 160px; margin-right: 30px; }
.side-item { height: 57px; border-bottom: 1px solid #e6e6e6; display: flex; align-items: center; letter-spacing: 1.050px; font-family: "Noto Sans CJK KR", sans-serif; }
.side-item:first-child { height: 49px; align-items: flex-start; }
.side-link { display: flex; align-items: center; flex: 1; height: 40px; padding: 0 16px; color: #007bff; border-radius: 4px; white-space: nowrap; }
.side-link.selected { color: #fff; background: #007bff; }
.side-link.corona { letter-spacing: .600px; }
.caret::after { content: ""; margin-left: 4px; margin-top: -2px; border-top: 5px solid; border-left: 5px solid transparent; border-right: 5px solid transparent; }
.title { width: 920px; height: 50px; margin: 0 0 16px; border-bottom: 1px solid #e3e3e3; font: 300 22px/31px "Noto Sans CJK KR", sans-serif; letter-spacing: 1.750px; white-space: nowrap; }
.title strong { font-size: 29px; font-weight: 700; letter-spacing: .9px; }
.detail { width: 920px; margin-left: 48px; }
.info { width: 920px; table-layout: fixed; border-collapse: collapse; margin-bottom: 16px; font-family: "Open Sans", "Noto Sans CJK KR", sans-serif; letter-spacing: 1px; }
.info td { height: 49px; padding: 12px; border-top: 1px solid #dee2e6; vertical-align: top; }
.info tr:first-child td { height: 56px; }
.info .key { width: 230px; }
.info .value { width: 508px; }
.info .num { font-size: 15px; letter-spacing: -.1px; }
.info sup { font-size: 12px; line-height: 0; vertical-align: 6px; }
.rerun { display: block; width: 60px; height: 31px; padding: 0; border: 0; border-radius: 3px; background: #007bff; color: #fff; font: 14px/21px "Noto Sans CJK KR", sans-serif; letter-spacing: .8px; }
.map { position: relative; width: 800px; height: 500px; border: 2px inset #eee; overflow: hidden; }
.tiles { display: block; width: 796px; height: 496px; }
.tiles path { stroke-linejoin: round; }
.lane { fill: none; stroke: #c9c5c3; stroke-width: 1.800; }
.street { fill: none; stroke: #fff; stroke-width: 3.500; }
.open { fill: #f2efe9; }
.farm { fill: #eef0d5; }
.grass { fill: #cdebb0; }
.terminal { fill: #d6d0dd; }
.runway { fill: none; stroke: #bbb8cc; stroke-width: 12; }
.industrial { fill: #ebdbe8; }
.school { fill: #c9c7b6; }
.park { fill: #c8facc; }
.stadium { fill: #b9e8ba; stroke: #b7a78f; stroke-width: 2; }
.forest { fill: #add19e; stroke: #add19e; stroke-width: 8; stroke-dasharray: 12 7; }
.military { fill: #f6e0da; }
.stream { fill: none; stroke: #aad3df; }
.river { fill: #aad3df; stroke: #c8facc; stroke-width: 18; paint-order: stroke; }
.boundary { fill: none; stroke: #9c7aa5; stroke-opacity: .6; stroke-width: 7; }
.ward { fill: none; stroke: #9c7aa5; stroke-opacity: .65; stroke-width: 3.500; stroke-dasharray: 14 5 4 5; }
.white { fill: none; stroke: #fff; stroke-width: 6; }
.casing { fill: none; }
.y { fill: none; stroke: var(--road, #cfd08f); stroke-width: var(--road-width, 12px); }
.fill-pass { --road: #f7fabf; --road-width: 9px; }
.casing.o { stroke: #d6a865; stroke-width: 12; }
.orange { fill: none; stroke: #fcd6a4; stroke-width: 9; }
.subway { fill: none; stroke: #a8968f; stroke-width: 3; stroke-dasharray: 12 7; }
.rail { fill: none; stroke: #777; stroke-width: 6; }
.rail-dash { fill: none; stroke: #ddd; stroke-width: 2; stroke-dasharray: 18 12; }
.rail-violet { fill: none; stroke: #8c808c; stroke-width: 6; }
.apron { fill: none; stroke: #aaa; stroke-width: 20; }
.casing.t { stroke: #d9816c; stroke-width: 14; }
.trunk { fill: none; stroke: #f9b29c; stroke-width: 12; }
.casing.m { stroke: #cf6079; stroke-width: 16; }
.motorway { fill: none; stroke: #e892a2; stroke-width: 13; }
.ramp { fill: none; stroke: #e59a8c; stroke-width: 9; }
.interchange { fill: none; stroke: #de7c90; stroke-width: 7; }
.tunnel { fill: none; stroke: #f29cac; stroke-width: 6; stroke-dasharray: 8 7; }
.bridge { fill: none; stroke: #ffe5c4; stroke-width: 9; stroke-dasharray: 14 6; }
.peak { fill: #d08f55; }
.station { fill: #7981b0; }
.tiles text { text-anchor: middle; font: 30px "Noto Sans CJK KR", sans-serif; paint-order: stroke; stroke-linejoin: round; }
.place text { fill: #3a3a3a; stroke: rgba(255, 255, 255, .75); stroke-width: 7px; }
.tiles .city text { fill: #222; stroke: rgba(255, 255, 255, .75); stroke-width: 7px; font-size: 43px; }
.tiles .shield text { fill: #b31b34; stroke: rgba(255, 255, 255, .75); stroke-width: 6px; font: italic 31px "Noto Sans", sans-serif; }
.airport-name text { fill: #8461c4; stroke: rgba(255, 255, 255, .7); stroke-width: 5px; }
.region text { fill: #8d6a9c; stroke: rgba(255, 255, 255, .7); stroke-width: 5px; }
.marker { fill: #3186cc; fill-opacity: .2; stroke: #3186cc; stroke-width: 8; }
.zoom { position: absolute; left: 10px; top: 10px; width: 26px; border-radius: 4px; background: #fff; box-shadow: 0 1px 5px rgba(0, 0, 0, .65); }
.zoom a { display: block; height: 26px; text-align: center; color: #000; font: bold 18px/25px "Liberation Sans", sans-serif; }
.zoom a + a { border-top: 1px solid #ccc; }
.credit { position: absolute; right: 0; bottom: 0; height: 16px; padding: 0 5px; background: rgba(255, 255, 255, .7); color: #333; font: 11px/16px "Liberation Sans", sans-serif; white-space: nowrap; }
.credit a { color: #0078a8; }
.footer { height: 56px; flex: none; display: flex; align-items: center; justify-content: center; padding-top: 2px; background: #f8f9fa; color: #808386; font: 15.450px/24px "Open Sans", sans-serif; }
```
